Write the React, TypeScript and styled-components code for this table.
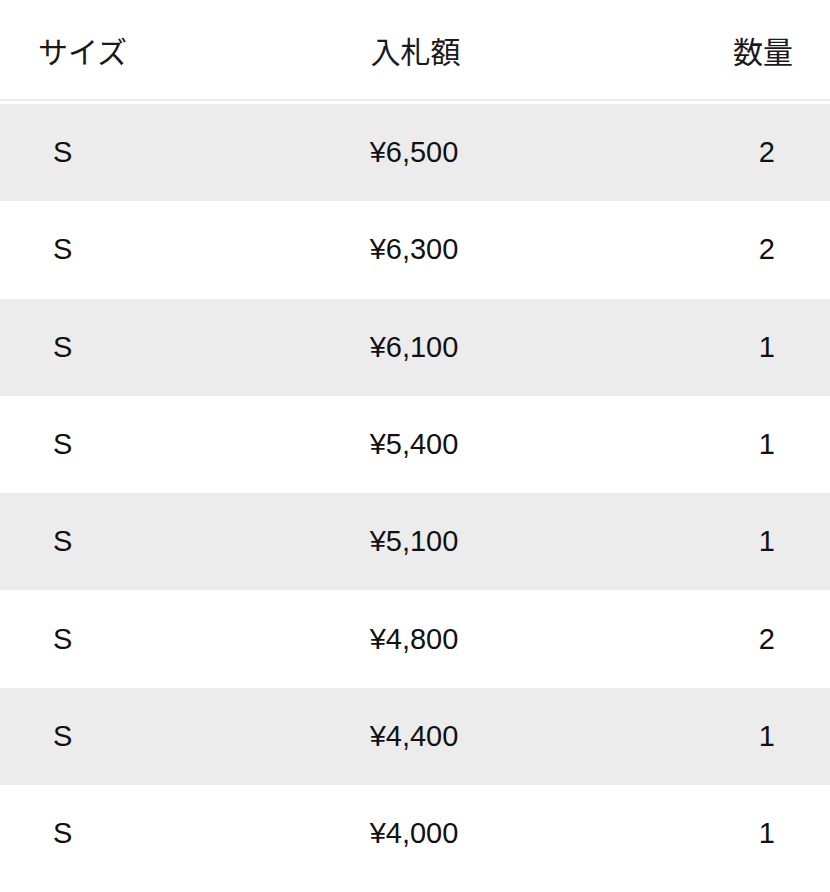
import styled, { createGlobalStyle } from "styled-components"

const GlobalStyle = createGlobalStyle`
  html, body {
    margin: 0;
    padding: 0;
    background: #ffffff;
  }
  body {
    font-family: "Liberation Sans", "Noto Sans CJK JP", sans-serif;
    color: #111111;
  }
`

const bids = [
  { size: "S", price: "¥6,500", qty: 2 },
  { size: "S", price: "¥6,300", qty: 2 },
  { size: "S", price: "¥6,100", qty: 1 },
  { size: "S", price: "¥5,400", qty: 1 },
  { size: "S", price: "¥5,100", qty: 1 },
  { size: "S", price: "¥4,800", qty: 2 },
  { size: "S", price: "¥4,400", qty: 1 },
  { size: "S", price: "¥4,000", qty: 1 },
]

export default function App() {
  return (
    <>
      <GlobalStyle />
      <Table>
        <Header>
          <Cell $align="left">サイズ</Cell>
          <Cell $align="center">入札額</Cell>
          <Cell $align="right">数量</Cell>
        </Header>
        <Rows>
          {bids.map((bid, i) => (
            <Row key={i} $striped={i % 2 === 0}>
              <Cell $align="left">{bid.size}</Cell>
              <Cell $align="center">{bid.price}</Cell>
              <Cell $align="right">{bid.qty}</Cell>
            </Row>
          ))}
        </Rows>
      </Table>
    </>
  )
}

const Table = styled.div`
  width: 830px;
  height: 892px;
  overflow: hidden;
`

const Header = styled.div`
  display: grid;
  grid-template-columns: 1fr 1fr 1fr;
  align-items: center;
  height: 101px;
  padding: 0 37px 0 38px;
  box-sizing: border-box;
  border-bottom: 2px solid #ebebeb;
  font-size: 30px;
  font-family: "Noto Sans CJK JP", sans-serif;
  font-weight: 400;
  color: #1a1a1a;
`

const Rows = styled.div`
  display: flex;
  flex-direction: column;
  padding-top: 3px;
`

const Row = styled.div<{ $striped: boolean }>`
  display: grid;
  grid-template-columns: 1fr 1fr 1fr;
  align-items: center;
  height: 97.3px;
  padding: 0 55px 0 53px;
  box-sizing: border-box;
  background: ${(p) => (p.$striped ? "#ececec" : "#ffffff")};
  font-size: 29px;
`

const Cell = styled.div<{ $align: "left" | "center" | "right" }>`
  text-align: ${(p) => p.$align};
  line-height: 1;
  white-space: nowrap;
`
